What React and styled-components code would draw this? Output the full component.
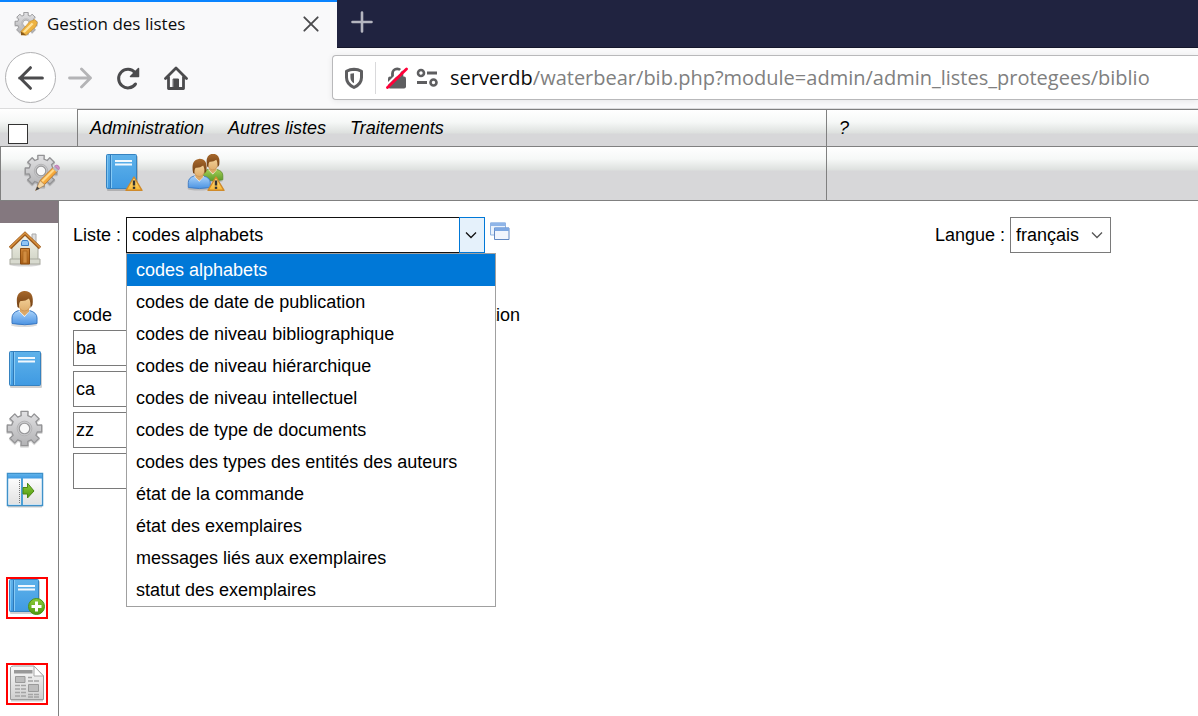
import React from "react";
import styled, { createGlobalStyle, css } from "styled-components";

const GlobalStyle = createGlobalStyle`
  *, *::before, *::after { box-sizing: border-box; }
  html, body, #root { height: 100%; }
  body {
    margin: 0;
    background: #fff;
    color: #000;
    font: 18px/20px "Liberation Sans", Arial, sans-serif;
    overflow: hidden;
  }
  button, input, select { font: inherit; color: inherit; }
`;

/* ---------- layout ---------- */

const Window = styled.div`
  display: flex;
  flex-direction: column;
  min-height: 100vh;
`;

const TabStrip = styled.div`
  display: flex;
  height: 48px;
  background: #202340;
  border-bottom: 1px solid #15172b;
`;

const Tab = styled.div`
  display: flex;
  align-items: center;
  width: 337px;
  height: 48px;
  padding: 0 18px 2px 14px;
  gap: 9px;
  background: #f9f9fa;
  border-top: 2px solid #0a84ff;
`;

const TabTitle = styled.span`
  flex: 1;
  font: 17px/24px "Open Sans", "Noto Sans", sans-serif;
  color: #0c0c0d;
  white-space: nowrap;
`;

const PlainButton = styled.button`
  display: flex;
  align-items: center;
  justify-content: center;
  flex: none;
  width: ${(p) => p.$size}px;
  height: ${(p) => p.$size}px;
  padding: 0;
  border: 0;
  background: none;
`;

const NewTab = styled(PlainButton)`
  margin: 10px 0 0 13px;
`;

const NavBar = styled.div`
  display: flex;
  align-items: center;
  gap: 24px;
  height: 61px;
  padding: 0 0 1px 5px;
  background: #f9f9fa;
  border-bottom: 1px solid #dcdcdd;
`;

const BackForward = styled.div`
  display: flex;
  align-items: center;
  gap: 12px;
`;

const BackButton = styled(PlainButton)`
  border: 1px solid #b1b1b3;
  border-radius: 50%;
  background: #fff;
`;

const UrlBar = styled.div`
  display: flex;
  align-items: center;
  flex: 1;
  height: 45px;
  margin-left: 120px;
  padding-left: 9px;
  background: #fff;
  border: 1px solid #b9b9bb;
  border-right: 0;
  border-radius: 4px 0 0 4px;
  box-shadow: 0 1px 6px rgba(0, 0, 0, 0.08);
  font: 20px/28px "Open Sans", "Noto Sans", sans-serif;
`;

const UrlDivider = styled.span`
  width: 1px;
  height: 32px;
  margin: 0 10px 0 9px;
  background: #d9d9db;
`;

const UrlHost = styled.label`
  margin-left: 12px;
  color: #0c0c0d;
`;

const UrlInput = styled.input`
  flex: 1;
  min-width: 0;
  padding: 0;
  border: 0;
  outline: 0;
  background: none;
  color: #808080;
`;

/* ---------- application bars ---------- */

const barFill = css`
  background: linear-gradient(#fff, #f6f8f7 12px, #dde0de 23px, #d7d7d9 24px);
`;

const MenuRow = styled.div`
  display: flex;
  height: 37px;
`;

const ToggleCell = styled.div`
  width: 77px;
  padding: 15px 8px 0;
  ${barFill}
`;

const Tick = styled.input`
  display: block;
  appearance: none;
  width: 20px;
  height: 20px;
  margin: 0;
  border: 1px solid #333;
  background: #fff;
`;

const BarCell = styled.div`
  display: flex;
  align-items: center;
  flex: ${(p) => (p.$side ? "none" : "1")};
  width: ${(p) => (p.$side ? "372px" : "auto")};
  gap: 24px;
  padding: 0 12px;
  border-top: 1px solid #808080;
  border-left: 1px solid #808080;
  ${barFill}
`;

const ToolCell = styled(BarCell)`
  gap: 44px;
  padding: 0 22px 2px;
`;

const MenuLink = styled.a`
  color: #000;
  font-style: italic;
  text-decoration: none;
`;

const ToolRow = styled.div`
  display: flex;
  height: 55px;
  border-bottom: 1px solid #808080;
`;

/* ---------- body ---------- */

const Body = styled.div`
  display: flex;
  flex: 1;
`;

const SideBar = styled.nav`
  display: flex;
  flex-direction: column;
  width: 59px;
  border-right: 1px solid #808080;
`;

const SideHead = styled.div`
  height: 22px;
  background: #84787f;
`;

const SideGroup = styled.div`
  display: flex;
  flex-direction: column;
  gap: ${(p) => p.$gap}px;
  padding: ${(p) => p.$top}px 0 0 6px;
`;

const FramedButton = styled(PlainButton)`
  border: 2px solid #f00;
`;

const Main = styled.main`
  flex: 1;
  padding: 16px 87px 0 14px;
`;

const Filters = styled.div`
  display: flex;
  justify-content: space-between;
`;

const Field = styled.div`
  display: flex;
  align-items: center;
  gap: 5px;
  height: 36px;
`;

const Combo = styled.div`
  position: relative;
  width: ${(p) => p.$width}px;
`;

const Select = styled.select`
  display: block;
  appearance: none;
  width: 100%;
  height: 36px;
  padding: 0 26px 0 5px;
  border: 1px solid ${(p) => (p.$open ? "#111" : "#7a7a7a")};
  border-radius: 0;
  outline: 0;
  background: #fff;
`;

const Arrow = styled.span`
  position: absolute;
  top: 0;
  right: 0;
  bottom: 0;
  display: flex;
  align-items: center;
  justify-content: center;
  width: 26px;
  padding-right: 2px;
  pointer-events: none;
  ${(p) => p.$open && "border: 1px solid #0078d7; background: #e5f1fb;"}
`;

const Popup = styled.ul`
  position: absolute;
  z-index: 1;
  top: 100%;
  left: 0;
  width: 370px;
  margin: 0;
  padding: 0;
  list-style: none;
  background: #fff;
  border: 1px solid #a0a0a0;
`;

const Choice = styled.li`
  padding: 6px 9px;
  color: ${(p) => (p.$active ? "#fff" : "#000")};
  background: ${(p) => (p.$active ? "#0078d7" : "#fff")};
`;

const WindowsButton = styled(PlainButton)`
  align-self: flex-start;
  margin-top: 5px;
`;

const Codes = styled.table`
  margin-top: 52px;
  border-spacing: 0;

  th { padding: 0; font-weight: normal; text-align: left; }
  td { padding: 5px 20px 0 0; }
`;

const CodeInput = styled.input`
  display: block;
  width: 340px;
  height: 36px;
  padding: 0 2px;
  border: 1px solid #7a7a7a;
  outline: 0;
`;

/* ---------- icons ---------- */

const Gradient = ({ id, from, to }) => (
  <linearGradient id={id} x1="0" y1="0" x2="0" y2="1">
    <stop offset="0" stopColor={from} />
    <stop offset="1" stopColor={to} />
  </linearGradient>
);

const Palette = styled.svg`
  position: absolute;
  width: 0;
  height: 0;
`;

const Gradients = () => (
  <Palette aria-hidden="true">
    <defs>
      <Gradient id="steel" from="#e2e2e4" to="#b2b2b4" />
      <Gradient id="blue" from="#5fb2ea" to="#3f9ae2" />
      <Gradient id="shirt" from="#a9d2fa" to="#4b93e2" />
      <Gradient id="green" from="#a4cf55" to="#5c9a2a" />
      <Gradient id="hair" from="#a8692c" to="#6e3d12" />
      <Gradient id="skin" from="#f6d7a0" to="#dfae6d" />
      <Gradient id="amber" from="#ffe08a" to="#f8b833" />
      <Gradient id="wall" from="#f4f4ea" to="#cfd2c4" />
      <Gradient id="wood" from="#cf8536" to="#a65c14" />
      <Gradient id="paper" from="#fafafa" to="#cfcfcf" />
      <Gradient id="plus" from="#8ccb3a" to="#4f9a10" />
    </defs>
  </Palette>
);

const gear = (cx, cy, outer, inner) => {
  const teeth = 8;
  const parts = [];
  for (let i = 0; i < teeth; i += 1) {
    const mid = (i * 2 * Math.PI) / teeth;
    [[-0.25, inner], [-0.2, outer], [0.2, outer], [0.25, inner]].forEach(([turn, r]) => {
      const a = mid + turn;
      parts.push(`${(cx + r * Math.sin(a)).toFixed(1)} ${(cy - r * Math.cos(a)).toFixed(1)}`);
    });
  }
  return `M${parts.join("L")}Z`;
};

const Svg = ({ size = 38, box = 38, children }) => (
  <svg width={size} height={size} viewBox={`0 0 ${box} ${box}`} aria-hidden="true">
    {children}
  </svg>
);

const GearShape = ({ cx = 19, cy = 19, r = 17 }) => (
  <g strokeLinejoin="round">
    <path d={gear(cx, cy + 1, r, r * 0.76)} fill="none" stroke="#000" strokeOpacity=".14" strokeWidth="2" />
    <path d={gear(cx, cy, r, r * 0.76)} fill="url(#steel)" stroke="#939395" strokeWidth="1.3" />
    <circle cx={cx} cy={cy} r={r * 0.42} fill="#c9c9cb" stroke="#b4b4b6" strokeWidth="1" />
    <circle cx={cx} cy={cy} r={r * 0.3} fill="#f8f8f8" stroke="#98989a" strokeWidth="1.2" />
  </g>
);

const PencilShape = () => (
  <g>
    <path d="M15 33l2.500-7L30 13.500l4 4L22 30z" fill="#f7a93a" stroke="#b5742a" strokeWidth=".8" />
    <path d="M18.500 26.500L30 15l1.500 1.500L20 28z" fill="#ffd98a" />
    <path d="M12.500 36.500l4.500-10 5 4.500z" fill="#f3d7a6" stroke="#a77a4a" strokeWidth=".6" />
    <path d="M12.500 36.500l1.700-4 2.500 2.300z" fill="#444" />
    <path d="M29.500 14l2-2 4 4-2 2z" fill="#b9bcc4" />
    <path d="M31.500 12q2.500-2 4.200 0t0 4z" fill="#cf8fc6" stroke="#a96ba1" strokeWidth=".6" />
  </g>
);

const GearPencil = () => (
  <Svg>
    <GearShape cx={18} cy={17} r={16} />
    <PencilShape />
  </Svg>
);

const TabIcon = () => (
  <svg width="24" height="24" viewBox="0 0 38 38" aria-hidden="true">
    <GearShape cx={19} cy={18} r={17.500} />
    <path d="M11 31L25 15l8-3 4 5-3 7-15 13-7-1z" fill="#eeb340" stroke="#c58c2d" />
    <path d="M14 31L28 17l3 2-14 14z" fill="#ffe39b" />
    <path d="M11 37l0-6 8 5z" fill="#8a5a1a" />
  </svg>
);

const BookShape = ({ x = 3, y = 2, w = 31, h = 35 }) => (
  <g>
    <rect x={x + 1} y={y + 2} width={w} height={h} rx="1" fill="#000" opacity=".18" />
    <rect x={x + 0.5} y={y + 0.5} width={w - 1} height={h - 1} rx="1" fill="url(#blue)" stroke="#3582c0" />
    <path d={`M${x + 1.5} ${y + 1.5}v${h - 3}`} stroke="#7cc4f2" />
    <path d={`M${x + 4.5} ${y + 1}v${h - 2}`} stroke="#2f79b8" />
    <path d={`M${x + 5.5} ${y + 1}v${h - 2}`} stroke="#86caf5" />
    <path d={`M${x + 9} ${y + 7}h17M${x + 9} ${y + 10.5}h17`} stroke="#fff" strokeWidth="2" opacity=".92" />
  </g>
);

const WarningShape = () => (
  <g>
    <path d="M29 23L37 36.300H21z" fill="url(#amber)" stroke="#cf8a2b" strokeWidth="1.400" strokeLinejoin="round" />
    <path d="M29 26.500v5" stroke="#333" strokeWidth="2.400" />
    <path d="M29 32.700v2.200" stroke="#333" strokeWidth="2.400" />
  </g>
);

const BookWarning = () => (
  <Svg>
    <BookShape x={1} y={0} w={31} h={35} />
    <WarningShape />
  </Svg>
);

const PersonShape = ({ shirt = "url(#shirt)", edge = "#3a78c2" }) => (
  <g>
    <ellipse cx="18" cy="35" rx="13" ry="2" fill="#000" opacity=".14" />
    <path d="M6 33.500V28q0-5.500 6.500-7.500h11Q31 22.500 31 28v5.500q-12 2.500-25 0z" fill={shirt} stroke={edge} />
    <path d="M12.500 20.500L18.500 27l5.500-6.500z" fill="#fff" />
    <path d="M14 17h9v4.500L18.500 26 14 21.500z" fill="#dca867" />
    <ellipse cx="18.500" cy="13" rx="6.400" ry="8" fill="url(#skin)" stroke="#c58e4f" strokeWidth=".7" />
    <path d="M11.500 17Q8.500 2 18 1q10.500-.5 8.500 14l-2 3q.5-6-1.500-9.500-4 3-8.500 2.500-2 2-1.500 7z" fill="url(#hair)" />
  </g>
);

const Person = () => (
  <Svg><PersonShape /></Svg>
);

const PeopleWarning = () => (
  <Svg>
    <g transform="translate(11 -1) scale(.8)">
      <PersonShape shirt="url(#green)" edge="#5b8a2c" />
    </g>
    <g transform="translate(-4 4) scale(.88)"><PersonShape /></g>
    <WarningShape />
  </Svg>
);

const House = () => (
  <Svg>
    <ellipse cx="19" cy="34.500" rx="16" ry="2" fill="#000" opacity=".16" />
    <path d="M26 4h4v13h-4z" fill="#ddd" stroke="#aaa" />
    <path d="M6 16L19 4l13 12v17H6z" fill="url(#wall)" stroke="#a9aa9f" />
    <path d="M4 29h30v5H4z" fill="#d8dacf" stroke="#a9aa9f" />
    <path d="M4 18L19 3.500 34 18" fill="none" stroke="#9c5a1c" strokeWidth="3.400" />
    <path d="M4 17.500L19 3 34 17.500" fill="none" stroke="#d8923f" strokeWidth="1.500" />
    <path d="M14.500 18.500h9V34h-9z" fill="url(#wood)" stroke="#8c4c10" />
    <path d="M17 21h4v12h-4z" fill="#d08c41" stroke="#a9651d" strokeWidth=".7" />
    <path d="M15.500 12.500l1-2h5l1 2v3h-7z" fill="#8fc5f4" stroke="#3d7fc4" />
  </Svg>
);

const Book = () => (
  <Svg><BookShape x={3} y={1} w={32} h={35} /></Svg>
);

const Gear = () => (
  <Svg><GearShape cx={18.5} cy={18.5} r={17.5} /></Svg>
);

const Panel = () => (
  <Svg>
    <path d="M2 36.500h34" stroke="#000" strokeOpacity=".2" strokeWidth="2" />
    <path d="M1.500 3.500h35v32h-35z" fill="#fff" stroke="#3f91c9" strokeWidth="1.500" />
    <path d="M3 9h12v25H3zM17 9h18v25H17z" fill="url(#paper)" opacity=".6" />
    <path d="M2 4h34v4.500H2z" fill="url(#blue)" />
    <path d="M16 8v27" stroke="#4ba0d6" strokeWidth="2" />
    <path d="M13.500 10v24" stroke="#777" strokeDasharray="1 1" />
    <path d="M17 17.500h4.500v-4.300L28 21l-6.500 7v-4H17z" fill="url(#plus)" stroke="#4b8714" />
  </Svg>
);

const BookPlus = () => (
  <Svg>
    <BookShape x={1} y={0} w={30} h={33} />
    <circle cx="28.500" cy="27.500" r="8" fill="url(#plus)" stroke="#4d9016" />
    <path d="M28.500 22.500v10M23.500 27.500h10" stroke="#fff" strokeWidth="3" />
  </Svg>
);

const News = () => (
  <Svg>
    <path d="M3 35.500h32" stroke="#000" strokeOpacity=".2" strokeWidth="2" />
    <path d="M2.500 2.500q1-1.500 3-1.500H26l9.500 10v23.500h-33z" fill="url(#paper)" stroke="#9b9b9b" />
    <path d="M26 1v10h9.500z" fill="#fff" stroke="#a8a8a8" />
    <path d="M6 5h18.500v3.500H6z" fill="#999" />
    <path d="M7.500 11.500h9.500v6H7.500zM20.500 19.500h10v7h-10z" fill="#bdbdbd" stroke="#9a9a9a" />
    <path d="M7 20.500h11M7 24h11M7 27.500h11M7 31h11M20 12.500h4M20 16h11M20 29.500h11M20 32h11" stroke="#a4a4a4" strokeWidth="1.500" strokeDasharray="5 1" />
  </Svg>
);

const Windows = () => (
  <svg width="20" height="20" viewBox="0 0 20 20" aria-hidden="true">
    <path d="M.5 1h15v12H.5z" fill="#eaf2fc" stroke="#8fb2e0" />
    <path d="M.5 .5h15v3.500H.5z" fill="#8fb5e8" />
    <path d="M4.500 6h14.500v11.500H4.500z" fill="#f1f5fd" stroke="#6288c2" />
    <path d="M4.500 5.500h14.500v3.500H4.500z" fill="#7ea8e2" />
  </svg>
);

const Chevron = ({ color }) => (
  <svg width="12" height="8" viewBox="0 0 12 8" aria-hidden="true">
    <path d="M1 1.500l5 5 5-5" fill="none" stroke={color} strokeWidth="1.300" />
  </svg>
);

const Stroke = ({ size = 24, color = "#4b4b4d", width = 3, children }) => (
  <svg
    width={size}
    height={size}
    viewBox="0 0 24 24"
    fill="none"
    stroke={color}
    strokeWidth={width}
    strokeLinecap="round"
    strokeLinejoin="round"
    aria-hidden="true"
  >
    {children}
  </svg>
);

const Shield = () => (
  <svg width="24" height="24" viewBox="0 0 24 24" aria-hidden="true">
    <path d="M12 3.200q4 .1 7.500 2v6.300q0 6.500-7.500 10-7.500-3.500-7.500-10V5.200q3.500-1.900 7.500-2z" fill="none" stroke="#5e5e60" strokeWidth="3" strokeLinejoin="round" />
    <path d="M12 7.200v10q-3.600-2-3.600-6V7.800q1.800-.6 3.600-.6z" fill="#5e5e60" />
  </svg>
);

const Lock = () => (
  <svg width="22" height="24" viewBox="0 0 22 24" aria-hidden="true">
    <path d="M6.500 11V7.500a4.700 4.700 0 0 1 9.400 0V11" fill="none" stroke="#5e5e60" strokeWidth="2.800" />
    <rect x="2" y="10.500" width="18" height="12" rx="2" fill="#5e5e60" />
    <path d="M-1 20.500L19 .5" stroke="#fff" strokeWidth="2" />
    <path d="M1.500 21.500L20.500 3" stroke="#ff0039" strokeWidth="2.800" strokeLinecap="round" />
  </svg>
);

const Sliders = () => (
  <svg width="22" height="20" viewBox="0 0 22 20" fill="none" stroke="#5e5e60" strokeWidth="2.600" aria-hidden="true">
    <circle cx="5" cy="5" r="3" />
    <path d="M11 5h10M1 14.500h10" strokeWidth="3" />
    <circle cx="17.500" cy="14.500" r="3" />
  </svg>
);

const IconSlot = styled.span`
  display: flex;
  margin-right: ${(p) => p.$after || 0}px;
`;

/* ---------- data ---------- */

const lists = [
  "codes alphabets",
  "codes de date de publication",
  "codes de niveau bibliographique",
  "codes de niveau hiérarchique",
  "codes de niveau intellectuel",
  "codes de type de documents",
  "codes des types des entités des auteurs",
  "état de la commande",
  "état des exemplaires",
  "messages liés aux exemplaires",
  "statut des exemplaires",
];

const menus = ["Administration", "Autres listes", "Traitements"];
const tools = [["Listes", GearPencil], ["Notices", BookWarning], ["Lecteurs", PeopleWarning]];
const sections = [["Accueil", House], ["Lecteurs", Person], ["Catalogue", Book], ["Réglages", Gear], ["Panneau", Panel]];
const shortcuts = [["Nouvelle notice", BookPlus], ["Périodiques", News]];
const codes = ["ba", "ca", "zz", ""];

export default function App() {
  return (
    <Window>
      <GlobalStyle />
      <Gradients />
      <TabStrip>
        <Tab>
          <TabIcon />
          <TabTitle>Gestion des listes</TabTitle>
          <PlainButton $size={16} aria-label="Fermer l’onglet">
            <Stroke size={16} width={2.8}><path d="M2 2l20 20M22 2L2 22" /></Stroke>
          </PlainButton>
        </Tab>
        <NewTab $size={24} aria-label="Nouvel onglet">
          <Stroke color="#b4b5bf" width={2.6}><path d="M12 2.500v19M2.500 12h19" /></Stroke>
        </NewTab>
      </TabStrip>

      <NavBar>
        <BackForward>
          <BackButton $size={51} aria-label="Précédent">
            <Stroke size={26} width={2.8}><path d="M22.500 12h-21M11.500 2.500L2 12l9.500 9.500" /></Stroke>
          </BackButton>
          <PlainButton $size={24} aria-label="Suivant">
            <Stroke color="#b4b4b6" width={2.8}><path d="M1.500 12h21M13.500 3l9 9-9 9" /></Stroke>
          </PlainButton>
        </BackForward>
        <PlainButton $size={24} aria-label="Actualiser">
          <Stroke>
            <path d="M19.500 18A9.300 9.300 0 1 1 19 6.500" />
            <path d="M22.500 2.500v8h-8l4-4z" fill="#4b4b4d" strokeWidth="1.500" />
          </Stroke>
        </PlainButton>
        <PlainButton $size={24} aria-label="Accueil">
          <Stroke width={2.8}>
            <path d="M1.500 12.500L12 2l10.500 10.500M4.500 11v11.500h15V11" />
            <path d="M9.500 13h5v9h-5z" fill="#4b4b4d" strokeWidth="1" />
          </Stroke>
        </PlainButton>
        <UrlBar>
          <IconSlot><Shield /></IconSlot>
          <UrlDivider />
          <IconSlot $after={8}><Lock /></IconSlot>
          <IconSlot><Sliders /></IconSlot>
          <UrlHost htmlFor="address">serverdb</UrlHost>
          <UrlInput id="address" spellCheck={false} defaultValue="/waterbear/bib.php?module=admin/admin_listes_protegees/biblio" />
        </UrlBar>
      </NavBar>

      <MenuRow>
        <ToggleCell>
          <Tick type="checkbox" aria-label="Sélection" />
        </ToggleCell>
        <BarCell>
          {menus.map((name) => <MenuLink href="#" key={name}>{name}</MenuLink>)}
        </BarCell>
        <BarCell $side><MenuLink href="#">?</MenuLink></BarCell>
      </MenuRow>

      <ToolRow>
        <ToolCell>
          {tools.map(([name, Icon]) => (
            <PlainButton $size={38} aria-label={name} key={name}><Icon /></PlainButton>
          ))}
        </ToolCell>
        <BarCell $side />
      </ToolRow>

      <Body>
        <SideBar>
          <SideHead />
          <SideGroup $gap={22} $top={7}>
            {sections.map(([name, Icon]) => (
              <PlainButton $size={38} aria-label={name} key={name}><Icon /></PlainButton>
            ))}
          </SideGroup>
          <SideGroup $gap={44} $top={69}>
            {shortcuts.map(([name, Icon]) => (
              <FramedButton $size={42} aria-label={name} key={name}><Icon /></FramedButton>
            ))}
          </SideGroup>
        </SideBar>

        <Main>
          <Filters>
            <Field>
              <label htmlFor="list">Liste :</label>
              <Combo $width={359}>
                <Select id="list" $open defaultValue={lists[0]}>
                  <option>{lists[0]}</option>
                </Select>
                <Arrow $open><Chevron color="#111" /></Arrow>
                <Popup role="listbox" aria-label="Liste">
                  {lists.map((name, i) => (
                    <Choice role="option" aria-selected={i === 0} $active={i === 0} key={name}>{name}</Choice>
                  ))}
                </Popup>
              </Combo>
              <WindowsButton $size={20} aria-label="Ouvrir dans une fenêtre"><Windows /></WindowsButton>
            </Field>
            <Field>
              <label htmlFor="language">Langue :</label>
              <Combo $width={101}>
                <Select id="language"><option>français</option></Select>
                <Arrow><Chevron color="#555" /></Arrow>
              </Combo>
            </Field>
          </Filters>

          <Codes>
            <thead>
              <tr><th scope="col">code</th><th scope="col">description</th></tr>
            </thead>
            <tbody>
              {codes.map((code, i) => (
                <tr key={i}>
                  <td><CodeInput aria-label="code" defaultValue={code} /></td>
                  <td />
                </tr>
              ))}
            </tbody>
          </Codes>
        </Main>
      </Body>
    </Window>
  );
}
